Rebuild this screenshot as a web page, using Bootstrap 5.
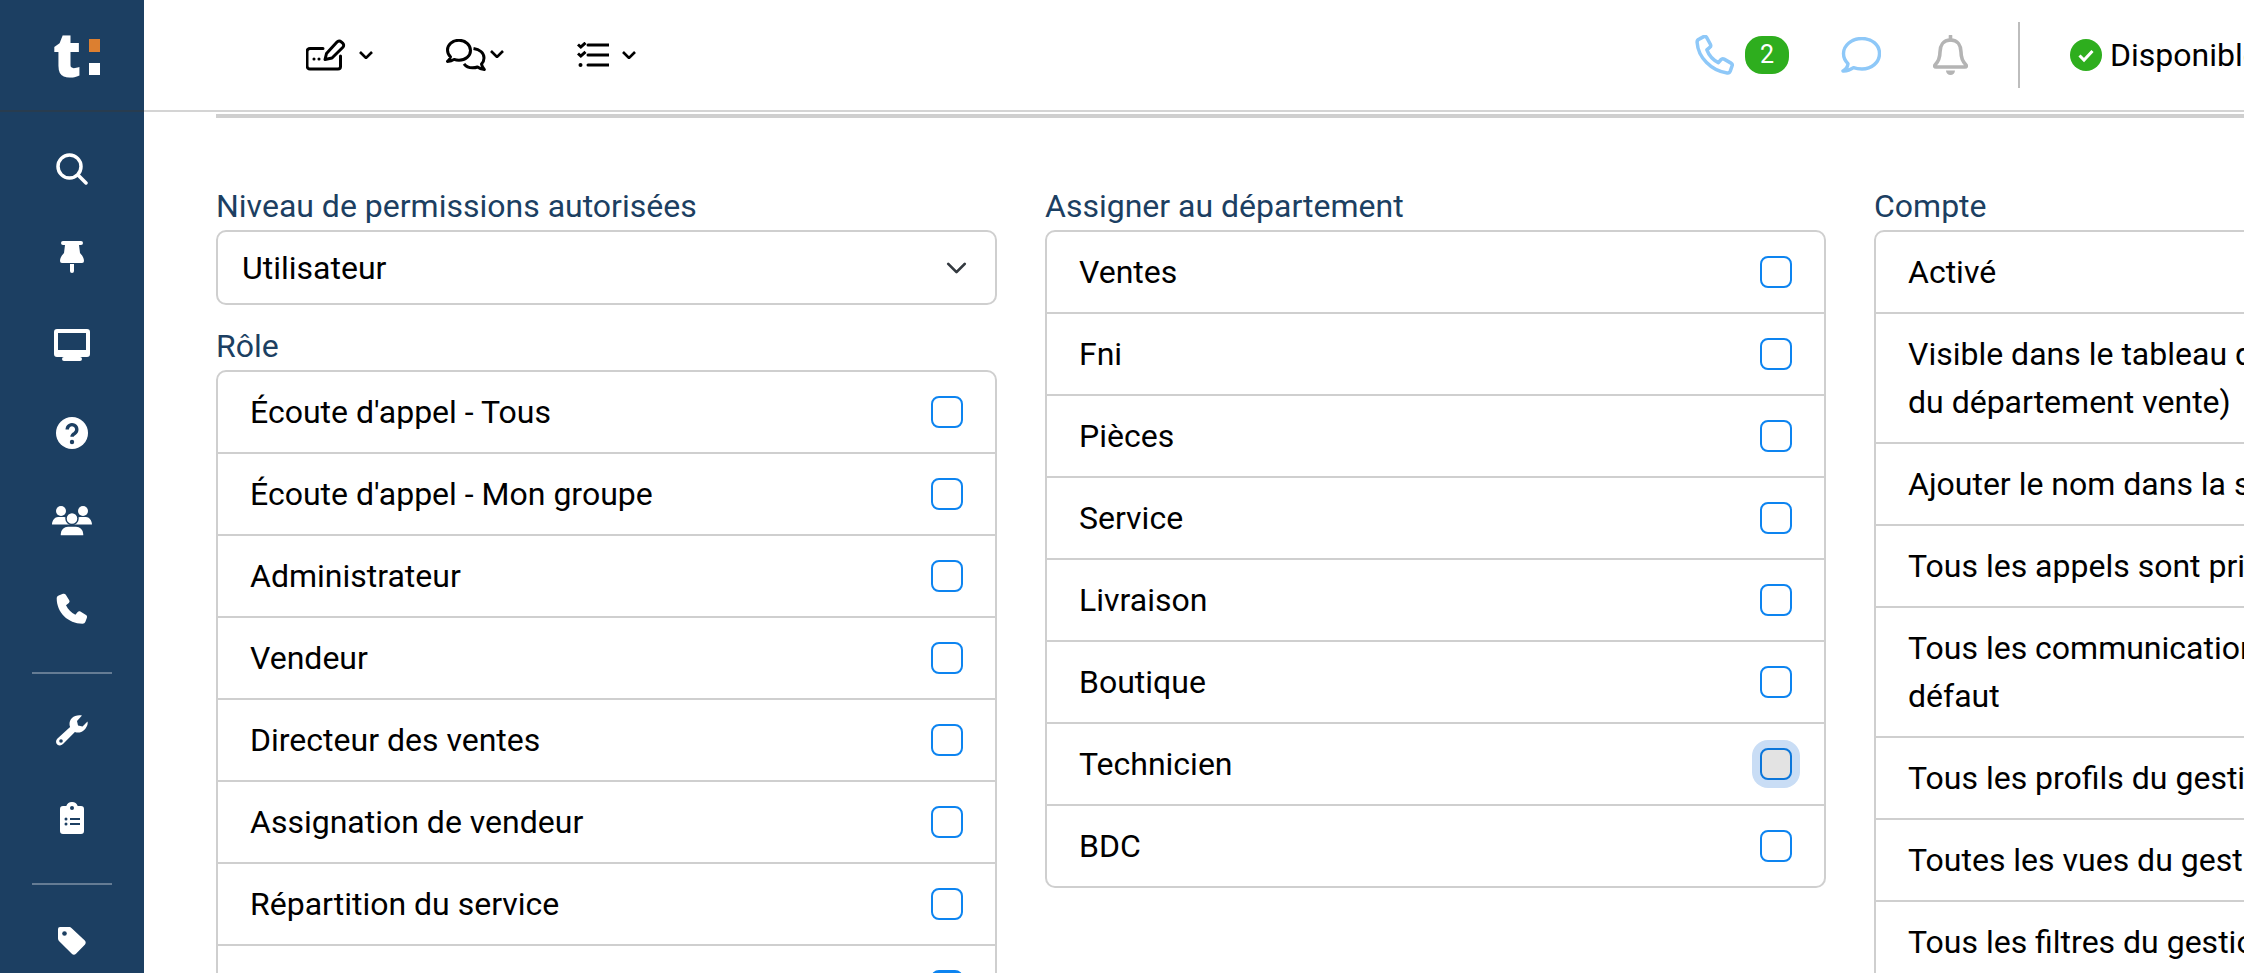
<!DOCTYPE html>
<html lang="fr">
<head>
    <meta charset="UTF-8">
    <title>Utilisateur</title>
    <link href="https://cdn.jsdelivr.net/npm/bootstrap@5.3.0/dist/css/bootstrap.min.css" rel="stylesheet">
    <style>
        html, body { height: 973px; overflow: hidden; }
        body { font-family: Roboto, "Liberation Sans", sans-serif; font-size: 32px; line-height: 48px; color: #000; background: #fff; }
        svg { display: block; flex: none; }
        .side-nav { width: 144px; height: 973px; flex: none; background: #1c3f62; }
        .side-logo { height: 112px; border-bottom: 2px solid #283c4f; gap: 8px; padding: 4px 0 0 9px; }
        .logo-t { font-family: "Open Sans", sans-serif; font-weight: 800; font-size: 62px; line-height: 58px; color: #fff; margin-top: -8px; }
        .logo-dot { width: 11px; height: 12px; background: #fff; }
        .logo-dot.orange { background: #dc7f30; height: 13px; margin-bottom: 7px; }
        .side-items { padding-top: 13px; }
        .side-item { height: 88px; }
        .side-rule { width: 80px; height: 2px; background: rgba(255, 255, 255, .32); margin: 19px auto 12px; }
        .side-rule.lower { margin-top: 21px; }
        .main-pane { width: 2100px; flex: none; }
        .top-bar { height: 112px; border-bottom: 2px solid #d4d4d4; }
        .top-left { padding-left: 162px; }
        .top-right { margin-left: 1059px; white-space: nowrap; }
        .count-pill { width: 44px; height: 38px; border-radius: 17px; background: #2eae1e; color: #fff; font-size: 25px; line-height: 38px; text-align: center; }
        .top-rule { width: 2px; height: 66px; background: #bdbdbd; }
        .content-pane { padding: 2px 0 0 72px; }
        .head-rule { height: 4px; background: #cfcfcf; margin-bottom: 64px; }
        .perm-grid { gap: 48px; }
        .perm-col { width: 781px; flex: none; }
        .perm-label { color: #1c3f62; margin: 0; font-size: 32px; line-height: 48px; display: block; }
        .perm-select { height: 75px; font-size: 32px; line-height: 48px; color: #000; padding: 0 24px; border: 2px solid #cfcfcf; border-radius: 10px; margin-bottom: 17px; background-size: 29px 22px; background-position: right 24px center; }
        .perm-list { --bs-list-group-border-width: 2px; --bs-list-group-border-color: #cfcfcf; --bs-list-group-border-radius: 10px; --bs-list-group-color: #000; --bs-list-group-item-padding-x: 32px; --bs-list-group-item-padding-y: 16px; }
        .perm-list .list-group-item { gap: 24px; }
        .perm-check { width: 32px; height: 32px; margin: 0; flex: none; border: 2px solid #0d84f0; border-radius: 8px; }
        .perm-check:checked { background-color: #0d84f0; border-color: #0d84f0; }
        .perm-check.is-focus { background-color: #e3e3e3; border-color: #0b76da; box-shadow: 0 0 0 8px #c9ddf5; }
    </style>
</head>
<body class="d-flex">

    <aside class="side-nav">
        <div class="side-logo d-flex justify-content-center align-items-center">
            <span class="logo-t">t</span>
            <span class="d-flex flex-column gap-1">
                <span class="logo-dot orange"></span>
                <span class="logo-dot"></span>
            </span>
        </div>
        <div class="side-items">
            <div class="side-item d-flex justify-content-center align-items-center">
                <svg width="32" height="32" viewBox="0 0 32 32" fill="none" stroke="#fff" stroke-width="3.5" stroke-linecap="round"><circle cx="13.5" cy="13.5" r="11.5"/><path d="M22.5 22.5 30 30"/></svg>
            </div>
            <div class="side-item d-flex justify-content-center align-items-center">
                <svg width="24" height="32" viewBox="0 0 24 32" fill="#fff"><path d="M3 0h18a2 2 0 0 1 0 4h-2l1 8c2 2 4 5 4 8a2 2 0 0 1-2 2H2a2 2 0 0 1-2-2c0-3 2-6 4-8l1-8H3a2 2 0 0 1 0-4z"/><path d="M10 23h4v7a2 2 0 0 1-4 0z"/></svg>
            </div>
            <div class="side-item d-flex justify-content-center align-items-center">
                <svg width="36" height="32" viewBox="0 0 36 32" fill="#fff"><path fill-rule="evenodd" d="M3 0h30a3 3 0 0 1 3 3v22a3 3 0 0 1-3 3H3a3 3 0 0 1-3-3V3a3 3 0 0 1 3-3zm1 4v17h28V4z"/><path d="M14 27h8v1h4a2 2 0 0 1 0 4H10a2 2 0 0 1 0-4h4z"/></svg>
            </div>
            <div class="side-item d-flex justify-content-center align-items-center">
                <svg width="32" height="32" viewBox="0 0 32 32"><circle cx="16" cy="16" r="16" fill="#fff"/><path d="M11.2 12.5a4.8 4.8 0 1 1 7.4 4c-1.7 1-2.6 1.7-2.6 3.2" fill="none" stroke="#1c3f62" stroke-width="3.4"/><circle cx="16" cy="25" r="2.2" fill="#1c3f62"/></svg>
            </div>
            <div class="side-item d-flex justify-content-center align-items-center">
                <svg width="40" height="30" viewBox="0 0 40 30" fill="#fff"><circle cx="9" cy="5" r="5"/><circle cx="31" cy="5" r="5"/><path d="M0 18.5c0-4 3-7.5 6-7.5h6c3 0 6 3.500 6 7.500zM22 18.500c0-4 3-7.500 6-7.500h6c3 0 6 3.500 6 7.500z"/><circle cx="20" cy="12.500" r="6" stroke="#1c3f62" stroke-width="1.500"/><path d="M8 30v-2c0-5 4-8 8-8h8c4 0 8 3 8 8v2z" stroke="#1c3f62" stroke-width="1.500"/></svg>
            </div>
            <div class="side-item d-flex justify-content-center align-items-center">
                <svg width="32" height="32" viewBox="0 0 32 32" fill="#fff"><path d="M7 .8c1-.4 2.200-.1 2.800.9l3.400 5.600c.6 1 .4 2-.4 2.700l-2.800 2.300c2 4.200 5.200 7.400 9.400 9.400l2.300-2.800c.7-.8 1.700-1 2.700-.4l5.600 3.400c1 .6 1.300 1.800.9 2.800l-1.500 4c-.5 1.200-1.500 2-2.900 2C12 30.700.7 19.500.7 5.300c0-1.400.8-2.400 2-2.900z"/></svg>
            </div>
            <div class="side-rule"></div>
            <div class="side-item d-flex justify-content-center align-items-center">
                <svg width="32" height="32" viewBox="0 0 32 32"><path fill="#fff" d="M31.500 7.500l-5 5-4.500-1-1-4.500 5-5.500C22.500.6 18.500 1.500 16 4c-2.500 2.500-3.100 6-1.900 9L1.500 24.600c-1.900 1.900-1.900 4.100-.3 5.800 1.700 1.600 3.900 1.600 5.800-.3L18.900 18c3 1.200 6.600.6 9-1.700 2.500-2.500 4.400-5.800 3.600-8.800z"/><circle cx="5" cy="27" r="1.800" fill="#1c3f62"/></svg>
            </div>
            <div class="side-item d-flex justify-content-center align-items-center">
                <svg width="24" height="32" viewBox="0 0 24 32"><path fill="#fff" d="M12 0a6 6 0 0 1 5.700 4H21a3 3 0 0 1 3 3v22a3 3 0 0 1-3 3H3a3 3 0 0 1-3-3V7a3 3 0 0 1 3-3h3.300A6 6 0 0 1 12 0z"/><circle cx="12" cy="6" r="2" fill="#1c3f62"/><g fill="#1c3f62"><circle cx="6" cy="17" r="1.500"/><circle cx="6" cy="22" r="1.500"/><rect x="10" y="16" width="10" height="2"/><rect x="10" y="21" width="10" height="2"/></g></svg>
            </div>
            <div class="side-rule lower"></div>
            <div class="side-item d-flex justify-content-center align-items-center">
                <svg width="28" height="28" viewBox="0 0 28 28"><path fill="#fff" d="M2 0h9c1 0 2 .5 2.700 1.200L26.800 13.500c1.200 1.200 1.200 3 0 4.200L18 26.800c-1.200 1.200-3 1.200-4.200 0L1.200 14.200C.4 13.500 0 12.500 0 11.500V2a2 2 0 0 1 2-2z"/><circle cx="6.500" cy="6.500" r="2.300" fill="#1c3f62"/></svg>
            </div>
        </div>
    </aside>

    <div class="main-pane">
        <header class="top-bar d-flex align-items-center">
            <div class="top-left d-flex align-items-center">
                <svg width="40" height="32" viewBox="0 0 40 32" fill="none" stroke="#000" stroke-width="3" stroke-linejoin="round" stroke-linecap="round"><path d="M17 9.500H4a3 3 0 0 0-3 3V27a3 3 0 0 0 3 3h28a2.500 2.500 0 0 0 2.500-2.500V17"/><path d="M19 20.500l1.500-6L31 3a3 3 0 0 1 4.200-.2l1.500 1.300a3 3 0 0 1 .2 4.200L26 19z"/><circle cx="8" cy="20" r=".8" fill="#000" stroke-width="1.500"/><circle cx="13" cy="20" r=".8" fill="#000" stroke-width="1.500"/></svg>
                <svg style="margin-left:13px" width="14" height="8" viewBox="0 0 14 8" fill="none" stroke="#000" stroke-width="2.600"><path d="M1 1l6 6 6-6"/></svg>
                <svg style="margin-left:73px" width="40" height="32" viewBox="0 0 40 32" fill="none" stroke="#000" stroke-width="3" stroke-linejoin="round"><path d="M13 1.300C6.500 1.300 1.500 5.600 1.500 11c0 3 1.200 5.200 3 6.800-.3 1.800-1.400 3.400-3 4.600 2.700 0 5-.8 6.600-2 1.500.6 3.200.9 4.900.9 6.500 0 11.500-4.300 11.500-9.800S19.500 1.300 13 1.300z"/><path d="M27.500 9.500c6 .9 10.500 4.200 10.500 9.500 0 2.500-1 4.500-2.500 6 .3 2 1.500 4 2.800 5.500-2.800-.4-5-1.200-6.800-2.500-1.500.6-3.500.8-5 .8-3.500 0-6.500-1.300-8.500-4"/></svg>
                <svg class="ms-1" style="margin-top:-2px" width="14" height="8" viewBox="0 0 14 8" fill="none" stroke="#000" stroke-width="2.600"><path d="M1 1l6 6 6-6"/></svg>
                <svg style="margin-left:73px" width="32" height="26" viewBox="0 0 32 26" fill="none" stroke="#000" stroke-width="3"><path d="M1 2.500l2.800 2.500L8.500 .8M1 11.500l2.800 2.500 4.700-4.200"/><path d="M11 3h20.500M11 13h20.500M11 23h20.500" stroke-linecap="round"/><circle cx="3.500" cy="23" r="2" fill="#000" stroke="none"/></svg>
                <svg style="margin-left:13px" width="14" height="8" viewBox="0 0 14 8" fill="none" stroke="#000" stroke-width="2.600"><path d="M1 1l6 6 6-6"/></svg>
            </div>
            <div class="top-right d-flex align-items-center">
                <svg width="40" height="40" viewBox="0 0 32 32" fill="none" stroke="#8ec8f8" stroke-width="2.800" stroke-linejoin="round"><path d="M7 1.300c1-.4 1.900-.1 2.400.8l2.900 5.300c.5 1 .3 1.900-.5 2.500l-2.300 2c1.500 4 4.600 7.900 9.200 10.200l2-2.300c.7-.8 1.700-1 2.600-.5l5.500 3.200c.9.500 1.200 1.500.8 2.400l-1.400 4c-.4 1-1.400 1.700-2.500 1.500C13 28.700 2.500 18 1.700 6c-.1-1.200.5-2.200 1.600-2.700z"/></svg>
                <span class="count-pill" style="margin-left:10px">2</span>
                <svg style="margin-left:52px" width="40" height="36" viewBox="0 0 40 36" fill="none" stroke="#8ec8f8" stroke-width="3.400" stroke-linejoin="round"><path d="M21 1.500C10.500 1.500 2.500 8.500 2.500 16.500c0 4 1.700 7.500 4.500 10.200-.3 2.700-1.700 5.300-5 7.300 4 .2 8-1.500 10.500-3.300 2.500.9 5.400 1.300 8.500 1.300 9.500 0 17.500-6.500 17.500-15.500S30.500 1.500 21 1.500z"/></svg>
                <svg style="margin-left:52px" width="35" height="40" viewBox="0 0 35 40" fill="none" stroke="#b4b4b4" stroke-width="3.600" stroke-linejoin="round"><path d="M17.500 5C10 5 7 11 7 17c0 6-2 10-5 13-.8 1-.3 2 1 2h29c1.300 0 1.800-1 1-2-3-3-5-7-5-13 0-6-3-12-10.500-12z"/><path d="M17.500 1v4" stroke-linecap="round"/><path d="M13 35.500h9a4.500 4.500 0 0 1-9 0z" fill="#b4b4b4" stroke="none"/></svg>
                <span class="top-rule" style="margin-left:50px"></span>
                <svg style="margin-left:50px" width="32" height="32" viewBox="0 0 32 32"><circle cx="16" cy="16" r="16" fill="#2eae1e"/><path d="M9.500 16.500l4.500 4.500 8.500-9" fill="none" stroke="#fff" stroke-width="3"/></svg>
                <span style="margin-left:8px">Disponible</span>
            </div>
        </header>

        <main class="content-pane">
            <div class="head-rule"></div>
            <div class="perm-grid d-flex align-items-start">
                <div class="perm-col">
                    <label class="perm-label">Niveau de permissions autorisées</label>
                    <select class="form-select perm-select"><option>Utilisateur</option></select>
                    <label class="perm-label">Rôle</label>
                    <ul class="list-group perm-list">
                        <li class="list-group-item d-flex justify-content-between align-items-center">Écoute d'appel - Tous<input class="form-check-input perm-check" type="checkbox"></li>
                        <li class="list-group-item d-flex justify-content-between align-items-center">Écoute d'appel - Mon groupe<input class="form-check-input perm-check" type="checkbox"></li>
                        <li class="list-group-item d-flex justify-content-between align-items-center">Administrateur<input class="form-check-input perm-check" type="checkbox"></li>
                        <li class="list-group-item d-flex justify-content-between align-items-center">Vendeur<input class="form-check-input perm-check" type="checkbox"></li>
                        <li class="list-group-item d-flex justify-content-between align-items-center">Directeur des ventes<input class="form-check-input perm-check" type="checkbox"></li>
                        <li class="list-group-item d-flex justify-content-between align-items-center">Assignation de vendeur<input class="form-check-input perm-check" type="checkbox"></li>
                        <li class="list-group-item d-flex justify-content-between align-items-center">Répartition du service<input class="form-check-input perm-check" type="checkbox"></li>
                        <li class="list-group-item d-flex justify-content-between align-items-center">&nbsp;<input class="form-check-input perm-check" type="checkbox" checked></li>
                    </ul>
                </div>
                <div class="perm-col">
                    <label class="perm-label">Assigner au département</label>
                    <ul class="list-group perm-list">
                        <li class="list-group-item d-flex justify-content-between align-items-center">Ventes<input class="form-check-input perm-check" type="checkbox"></li>
                        <li class="list-group-item d-flex justify-content-between align-items-center">Fni<input class="form-check-input perm-check" type="checkbox"></li>
                        <li class="list-group-item d-flex justify-content-between align-items-center">Pièces<input class="form-check-input perm-check" type="checkbox"></li>
                        <li class="list-group-item d-flex justify-content-between align-items-center">Service<input class="form-check-input perm-check" type="checkbox"></li>
                        <li class="list-group-item d-flex justify-content-between align-items-center">Livraison<input class="form-check-input perm-check" type="checkbox"></li>
                        <li class="list-group-item d-flex justify-content-between align-items-center">Boutique<input class="form-check-input perm-check" type="checkbox"></li>
                        <li class="list-group-item d-flex justify-content-between align-items-center">Technicien<input class="form-check-input perm-check is-focus" type="checkbox"></li>
                        <li class="list-group-item d-flex justify-content-between align-items-center">BDC<input class="form-check-input perm-check" type="checkbox"></li>
                    </ul>
                </div>
                <div class="perm-col">
                    <label class="perm-label">Compte</label>
                    <ul class="list-group perm-list">
                        <li class="list-group-item d-flex justify-content-between align-items-center">Activé<input class="form-check-input perm-check" type="checkbox"></li>
                        <li class="list-group-item d-flex justify-content-between align-items-center"><span>Visible dans le tableau de bord<br>du département vente)</span><input class="form-check-input perm-check" type="checkbox"></li>
                        <li class="list-group-item d-flex justify-content-between align-items-center">Ajouter le nom dans la signature<input class="form-check-input perm-check" type="checkbox"></li>
                        <li class="list-group-item d-flex justify-content-between align-items-center">Tous les appels sont privés<input class="form-check-input perm-check" type="checkbox"></li>
                        <li class="list-group-item d-flex justify-content-between align-items-center"><span>Tous les communications privées par<br>défaut</span><input class="form-check-input perm-check" type="checkbox"></li>
                        <li class="list-group-item d-flex justify-content-between align-items-center">Tous les profils du gestionnaire<input class="form-check-input perm-check" type="checkbox"></li>
                        <li class="list-group-item d-flex justify-content-between align-items-center">Toutes les vues du gestionnaire<input class="form-check-input perm-check" type="checkbox"></li>
                        <li class="list-group-item d-flex justify-content-between align-items-center">Tous les filtres du gestionnaire<input class="form-check-input perm-check" type="checkbox"></li>
                    </ul>
                </div>
            </div>
        </main>
    </div>

    <script src="https://cdn.jsdelivr.net/npm/bootstrap@5.3.0/dist/js/bootstrap.bundle.min.js"></script>
</body>
</html>
